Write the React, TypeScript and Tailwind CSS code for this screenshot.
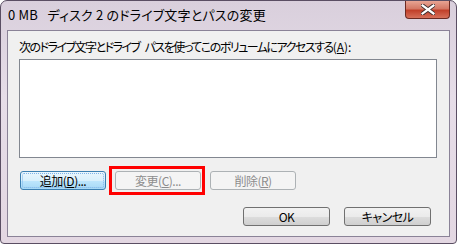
import React from 'react';

const jp = "font-['Meiryo_UI','Noto_Sans_CJK_JP',sans-serif] [font-feature-settings:'palt']";

function Btn({ label, disabled, focused }: { label: React.ReactNode; disabled?: boolean; focused?: boolean }) {
  if (disabled) {
    return (
      <div className="flex h-[19px] w-[86px] items-center justify-center rounded-[3px] border border-[#adb2b5] bg-[#f4f4f4] text-[12px] leading-none tracking-[-0.5px] text-[#8d8d8d]">
        {label}
      </div>
    );
  }
  if (focused) {
    return (
      <div className="flex h-[19px] w-[86px] items-center justify-center rounded-[3px] border border-[#3c7fb1] bg-[linear-gradient(to_bottom,#eaf6fd_0%,#d9f0fc_50%,#bee6fd_51%,#a7d9f5_100%)] p-[1px] text-[12px] leading-none tracking-[-0.5px] text-black">
        <div className="flex h-full w-full items-center justify-center rounded-[2px] border border-dotted border-[#7eb4ea]">
          {label}
        </div>
      </div>
    );
  }
  return (
    <div className="flex h-[19px] w-[87px] items-center justify-center rounded-[3px] border border-[#707070] bg-[linear-gradient(to_bottom,#f2f2f2_0%,#ebebeb_50%,#dddddd_51%,#cfcfcf_100%)] text-[12px] leading-none tracking-[-0.5px] text-black">
      {label}
    </div>
  );
}

export default function App() {
  return (
    <div className={`h-[244px] w-[458px] bg-white ${jp}`}>
      <div className="flex h-[244px] w-[457px] flex-col rounded-t-[7px] rounded-b-[4px] border border-[#5a4e63] bg-[linear-gradient(to_bottom,#d9cfdc_0%,#e6dde8_40%,#e3d7e2_100%)]">
        {/* title bar */}
        <div className="flex h-[29px] shrink-0 items-start justify-between">
          <div className="whitespace-pre pl-[7px] pt-[6px] text-[13px] leading-[16px] tracking-[0.2px] text-black">
            {'0 MB   ディスク 2 のドライブ文字とパスの変更'}
          </div>
          <div className="mr-[6px] flex h-[18px] w-[45px] items-center justify-center rounded-b-[4px] border border-t-0 border-[#6b2a22] bg-[linear-gradient(to_bottom,#e8a493_0%,#d47865_45%,#c1402a_55%,#d6705a_100%)]">
            <svg width="14" height="11" viewBox="0 0 14 11">
              <path d="M1 1 L13 10 M13 1 L1 10" stroke="#3b2a2a" strokeWidth="4" strokeLinecap="square" />
              <path d="M1.5 1.5 L12.5 9.5 M12.5 1.5 L1.5 9.5" stroke="#ffffff" strokeWidth="2.2" strokeLinecap="square" />
            </svg>
          </div>
        </div>

        {/* client area */}
        <div className="mx-[6px] mb-[6px] flex flex-1 flex-col border border-[#8a8297] bg-[#f0f0f0] pl-[11px] pr-[12px]">
          <div className="whitespace-pre pt-[9px] text-[12px] leading-[14px] text-black">
            <span className="tracking-[-1.5px]">次のドライブ文字とドライブ</span>
            <span className="inline-block w-[5px]" />
            <span className="tracking-[-1.5px]">パスを使ってこのボリュームにアクセスする</span>
            (<span className="underline">A</span>):
          </div>
          <div className="mt-[5px] h-[99px] w-[418px] border border-[#828790] bg-white" />

          <div className="mt-[13px] flex gap-[9px] pl-[1px]">
            <Btn focused label={<>追加(<span className="underline">D</span>)...</>} />
            <div className="relative">
              <Btn disabled label={<>変更(<span className="underline">C</span>)...</>} />
              <div className="pointer-events-none absolute left-[-6px] top-[-5px] h-[29px] w-[96px] border-[3px] border-[#ff0000]" />
            </div>
            <Btn disabled label={<>削除(<span className="underline">R</span>)</>} />
          </div>

          <div className="mt-[17px] flex justify-end gap-[14px] pr-[6px]">
            <Btn label="OK" />
            <Btn label="キャンセル" />
          </div>
        </div>
      </div>
    </div>
  );
}
